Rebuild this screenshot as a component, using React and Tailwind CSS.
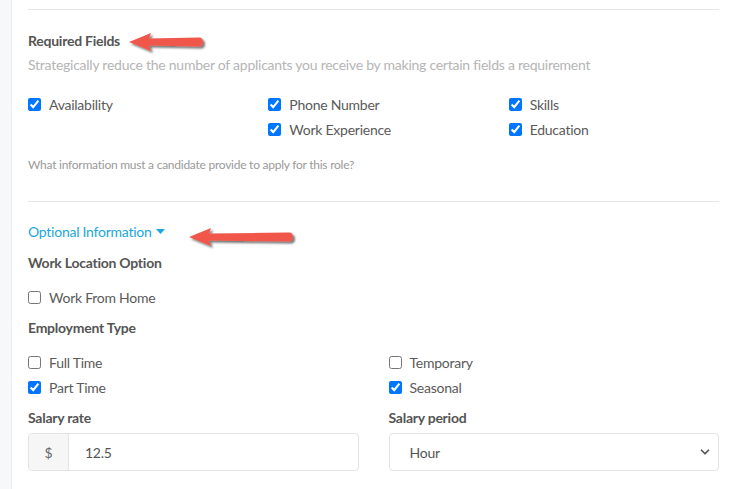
import { ChevronDown } from 'lucide-react'

const font = { fontFamily: 'Lato, "Liberation Sans", sans-serif', letterSpacing: '-0.25px' }

function Check({ label, checked }) {
  return (
    <label className="flex items-center gap-[8px] h-[25px] text-[14px] text-[#5a5a5a]">
      <input type="checkbox" defaultChecked={checked} className="w-[13px] h-[13px] m-0" />
      <span>{label}</span>
    </label>
  )
}

// red annotation arrow pointing left
function Arrow({ className, length }) {
  const w = length + 10
  return (
    <svg className={className} width={w} height="26" viewBox={`0 0 ${w} 26`}>
      <defs>
        <filter id={`sh${length}`} x="-10%" y="-40%" width="130%" height="200%">
          <feDropShadow dx="2" dy="2" stdDeviation="1.2" floodColor="#000" floodOpacity="0.55" />
        </filter>
      </defs>
      <path
        d={`M2 11 L24 2 L22 7.5 L${length - 4} 6.5 Q${length} 6.5 ${length} 11 Q${length} 15.5 ${length - 4} 15.5 L22 14.5 L24 20 Z`}
        fill="#f0574a"
        filter={`url(#sh${length})`}
      />
    </svg>
  )
}

export default function App() {
  return (
    <div className="flex w-[741px] h-[489px] bg-white overflow-hidden" style={font}>
      <div className="w-[12px] shrink-0 bg-[#f7f8f9] border-r border-[#e9ecef]" />
      <div className="flex-1 pl-[16px] pr-[22px] pt-[9px]">
        <div className="border-t border-[#e6e6e6]" />

        <div className="relative mt-[21px]">
          <h3 className="text-[14px] font-bold text-[#555] leading-[20px]">Required Fields</h3>
          <Arrow className="absolute left-[99px] top-[0px]" length={76} />
        </div>
        <p className="mt-[4px] text-[14px] text-[#b5b5b5] leading-[20px]">
          Strategically reduce the number of applicants you receive by making certain fields a requirement
        </p>

        <div className="grid grid-cols-3 gap-x-[30px] mt-[17px]">
          <div>
            <Check label="Availability" checked />
          </div>
          <div>
            <Check label="Phone Number" checked />
            <Check label="Work Experience" checked />
          </div>
          <div>
            <Check label="Skills" checked />
            <Check label="Education" checked />
          </div>
        </div>

        <p className="mt-[16px] text-[12px] text-[#9a9a9a] leading-[14px]">
          What information must a candidate provide to apply for this role?
        </p>

        <div className="border-t border-[#e6e6e6] mt-[29px]" />

        <div className="relative mt-[20px]">
          <button className="flex items-center gap-[4px] text-[14px] text-[#1ba6dc] leading-[20px]">
            Optional Information
            <svg width="9" height="6" viewBox="0 0 9 6"><path d="M0 0 L9 0 L4.5 5 Z" fill="#1ba6dc" /></svg>
          </button>
          <Arrow className="absolute left-[159px] top-[4px]" length={106} />
        </div>

        <h4 className="mt-[11px] text-[14px] font-bold text-[#555] leading-[20px]">Work Location Option</h4>
        <div className="mt-[12px]">
          <Check label="Work From Home" />
        </div>

        <h4 className="mt-[8px] text-[14px] font-bold text-[#555] leading-[20px]">Employment Type</h4>

        <div className="grid grid-cols-2 gap-x-[30px] mt-[12px]">
          <div>
            <Check label="Full Time" />
            <Check label="Part Time" checked />
          </div>
          <div>
            <Check label="Temporary" />
            <Check label="Seasonal" checked />
          </div>
        </div>

        <div className="grid grid-cols-2 gap-x-[30px] mt-[8px]">
          <div>
            <label className="block text-[14px] font-bold text-[#555] leading-[20px]">Salary rate</label>
            <div className="flex mt-[5px] h-[38px] border border-[#e3e3e3] rounded-[4px] overflow-hidden">
              <span className="w-[40px] flex items-center justify-center bg-[#f6f6f6] border-r border-[#e3e3e3] text-[14px] text-[#666]">$</span>
              <span className="flex items-center pl-[16px] text-[14px] text-[#555]">12.5</span>
            </div>
          </div>
          <div>
            <label className="block text-[14px] font-bold text-[#555] leading-[20px]">Salary period</label>
            <div className="flex items-center justify-between mt-[5px] h-[38px] border border-[#e3e3e3] rounded-[4px] pl-[20px] pr-[6px]">
              <span className="text-[14px] text-[#555]">Hour</span>
              <ChevronDown size={14} strokeWidth={3} className="text-[#555]" />
            </div>
          </div>
        </div>
      </div>
    </div>
  )
}
